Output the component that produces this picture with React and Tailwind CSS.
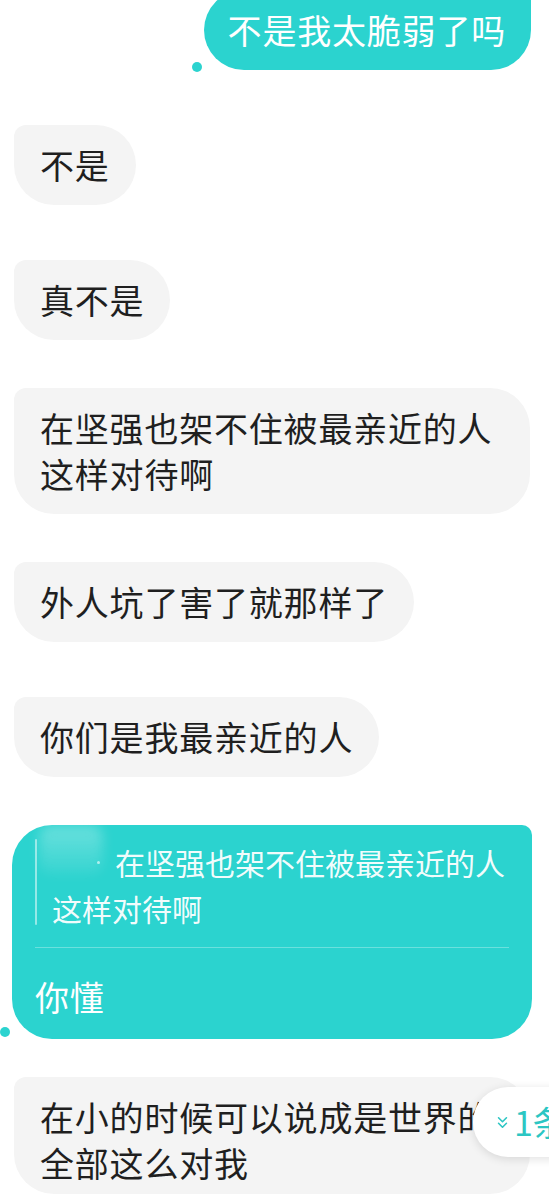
import React from "react";
import { ChevronsDown } from "lucide-react";

const font = { fontFamily: '"Noto Sans CJK SC", "Noto Sans", sans-serif' };

function Gray({ children, className = "" }) {
  return (
    <div
      className={
        "self-start bg-[#f4f4f4] text-[#1f1f1f] text-[34px] leading-[46px] tracking-[0.8px] px-[26px] py-[17px] rounded-tl-[12px] rounded-tr-[40px] rounded-br-[40px] rounded-bl-[40px] " +
        className
      }
    >
      {children}
    </div>
  );
}

export default function App() {
  return (
    <div className="relative h-[1200px] w-[549px] overflow-hidden bg-white" style={font}>
      <div className="flex flex-col pl-[14px] pr-[18px]">
        {/* sent top bubble */}
        <div className="relative self-end mt-[-10px]">
          <div className="bg-[#2bd3cf] text-white text-[34px] leading-[46px] tracking-[0.8px] pl-[24px] pr-[25px] py-[17px] rounded-tl-[40px] rounded-tr-[10px] rounded-br-[40px] rounded-bl-[40px]">
            不是我太脆弱了吗
          </div>
          <span className="absolute left-[-12px] bottom-[-2px] h-[10px] w-[10px] rounded-full bg-[#2bd3cf]" />
        </div>

        <Gray className="mt-[55px]">不是</Gray>
        <Gray className="mt-[55px]">真不是</Gray>
        <Gray className="mt-[48px] w-[516px]">
          在坚强也架不住被最亲近的人
          <br />
          这样对待啊
        </Gray>
        <Gray className="mt-[48px]">外人坑了害了就那样了</Gray>
        <Gray className="mt-[55px]">你们是我最亲近的人</Gray>

        {/* quote reply bubble */}
        <div className="relative mt-[48px] ml-[-2px] w-[520px]">
          <div className="bg-[#2bd3cf] text-white rounded-tl-[40px] rounded-tr-[10px] rounded-br-[40px] rounded-bl-[40px] px-[23px] pt-[14px] pb-[19px]">
            <div className="relative flex">
              <div className="w-[2px] rounded-full bg-white/50 mb-[6px]" />
              <p className="relative pl-[15px] text-[30px] leading-[46px] text-white/95 [text-indent:63px]">
                在坚强也架不住被最亲近的人
                <br />
                这样对待啊
              </p>
              <div className="absolute left-[4px] top-[-14px] h-[50px] w-[64px] rounded-[12px] bg-gradient-to-b from-white/30 to-white/5 blur-[6px]" />
              <span className="absolute left-[62px] top-[22px] h-[3px] w-[3px] rounded-full bg-white/60" />
            </div>
            <div className="mt-[16px] h-[1px] bg-white/30" />
            <div className="mt-[26px] text-[34px] leading-[46px] tracking-[0.8px]">你懂</div>
          </div>
          <span className="absolute left-[-12px] bottom-[2px] h-[10px] w-[10px] rounded-full bg-[#2bd3cf]" />
        </div>

        <Gray className="mt-[38px] w-[516px] pb-[8px] rounded-bl-[24px] rounded-br-[24px]">
          在小的时候可以说成是世界的
          <br />
          全部这么对我
        </Gray>
      </div>

      {/* new message badge */}
      <div className="absolute left-[473px] top-[1087px] flex h-[70px] w-[120px] items-center gap-[2px] rounded-full bg-white pl-[20px] shadow-[0_2px_10px_rgba(0,0,0,0.12)]">
        <ChevronsDown size={19} strokeWidth={2} className="text-[#2cc6c3]" />
        <span className="text-[34px] leading-none text-[#2cc6c3]">1条</span>
      </div>
    </div>
  );
}
